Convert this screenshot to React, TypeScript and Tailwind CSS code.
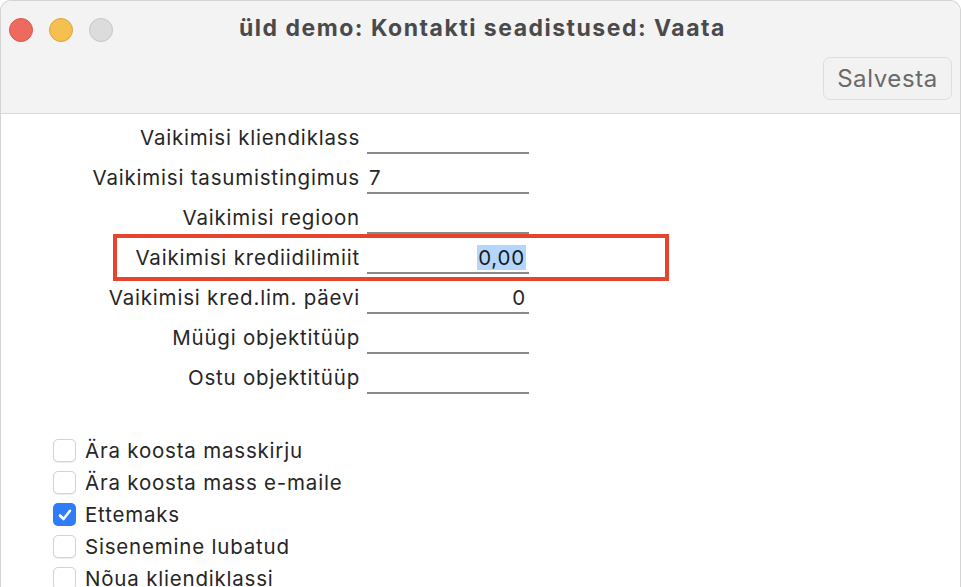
import React from "react";

const rows: { label: string; value: string; align: "left" | "right"; highlight?: boolean }[] = [
  { label: "Vaikimisi kliendiklass", value: "", align: "left" },
  { label: "Vaikimisi tasumistingimus", value: "7", align: "left" },
  { label: "Vaikimisi regioon", value: "", align: "left" },
  { label: "Vaikimisi krediidilimiit", value: "0,00", align: "right", highlight: true },
  { label: "Vaikimisi kred.lim. päevi", value: "0", align: "right" },
  { label: "Müügi objektitüüp", value: "", align: "left" },
  { label: "Ostu objektitüüp", value: "", align: "left" },
];

const checks: { label: string; checked: boolean }[] = [
  { label: "Ära koosta masskirju", checked: false },
  { label: "Ära koosta mass e-maile", checked: false },
  { label: "Ettemaks", checked: true },
  { label: "Sisenemine lubatud", checked: false },
  { label: "Nõua kliendiklassi", checked: false },
];

export default function App() {
  return (
    <div
      className="w-[961px] h-[587px] overflow-hidden bg-white text-[#262626]"
      style={{ fontFamily: "Inter, 'Noto Sans', sans-serif" }}
    >
      <div className="h-full rounded-t-[11px] border-t border-x border-[#d4d4d4] bg-white overflow-hidden flex flex-col">
        {/* Toolbar */}
        <div className="h-[113px] shrink-0 bg-[#f3f3f3] border-b border-[#d9d9d9] flex flex-col">
          <div className="h-[56px] flex items-center px-[8px] relative">
            <div className="flex gap-[16px] pt-[1px]">
              <span className="block w-[24px] h-[24px] rounded-full bg-[#ee6a5f] border border-[#d9584d]" />
              <span className="block w-[24px] h-[24px] rounded-full bg-[#f5c04f] border border-[#dca63a]" />
              <span className="block w-[24px] h-[24px] rounded-full bg-[#dcdcdc] border border-[#c6c6c6]" />
            </div>
            <div className="absolute inset-0 flex items-center justify-center pl-[4px] pb-[1px]">
              <span className="text-[23px] font-bold text-[#4a4a4a] tracking-[1.5px]">
                üld demo: Kontakti seadistused: Vaata
              </span>
            </div>
          </div>
          <div className="flex justify-end pr-[8px]">
            <button className="w-[129px] h-[43px] rounded-[7px] border border-[#dedede] bg-[#f2f2f2] text-[24px] tracking-[0.6px] text-[#6a6a6a] flex items-center justify-center">
              Salvesta
            </button>
          </div>
        </div>

        {/* Content */}
        <div className="relative flex-1">
          <div className="flex flex-col">
            {rows.map((r) => (
              <div key={r.label} className="h-[40px] flex items-end">
                <div className="w-[359px] text-right pb-[4px] text-[20.5px] tracking-[0.8px] leading-[24px] whitespace-nowrap">
                  {r.label}
                </div>
                <div
                  className={
                    "ml-[7px] w-[162px] h-[30px] border-b-2 border-[#8a8a8a] flex items-end pb-[2px] text-[20.5px] tracking-[0.8px] leading-[24px] " +
                    (r.align === "right" ? "justify-end pr-[3px]" : "justify-start pl-[2px]")
                  }
                >
                  {r.highlight ? (
                    <span className="bg-[#b4d6fd] text-[#1a1a1a] pl-[1px] pr-[1px] h-[25px] flex items-center">{r.value}</span>
                  ) : (
                    <span>{r.value}</span>
                  )}
                </div>
              </div>
            ))}
          </div>

          {/* annotation box */}
          <div className="absolute left-[112px] top-[120px] w-[556px] h-[47px] border-4 border-[#e5452f] pointer-events-none" />

          <div className="flex flex-col gap-[9px] pl-[52px] pt-[45px]">
            {checks.map((c) => (
              <div key={c.label} className="flex items-center gap-[9px] h-[23px]">
                {c.checked ? (
                  <span className="w-[23px] h-[23px] rounded-[5px] bg-[#2f7cf6] flex items-center justify-center shrink-0">
                    <svg width="16" height="16" viewBox="0 0 16 16">
                      <path d="M3 8.5 L6.5 12 L13 3.8" fill="none" stroke="white" strokeWidth="2.6" strokeLinecap="round" strokeLinejoin="round" />
                    </svg>
                  </span>
                ) : (
                  <span className="w-[23px] h-[23px] rounded-[5px] bg-white border border-[#d3d3d3] shadow-[0_0.5px_1px_rgba(0,0,0,0.08)] shrink-0" />
                )}
                <span className="text-[20.5px] tracking-[0.8px] leading-[24px] whitespace-nowrap">{c.label}</span>
              </div>
            ))}
          </div>
        </div>
      </div>
    </div>
  );
}
